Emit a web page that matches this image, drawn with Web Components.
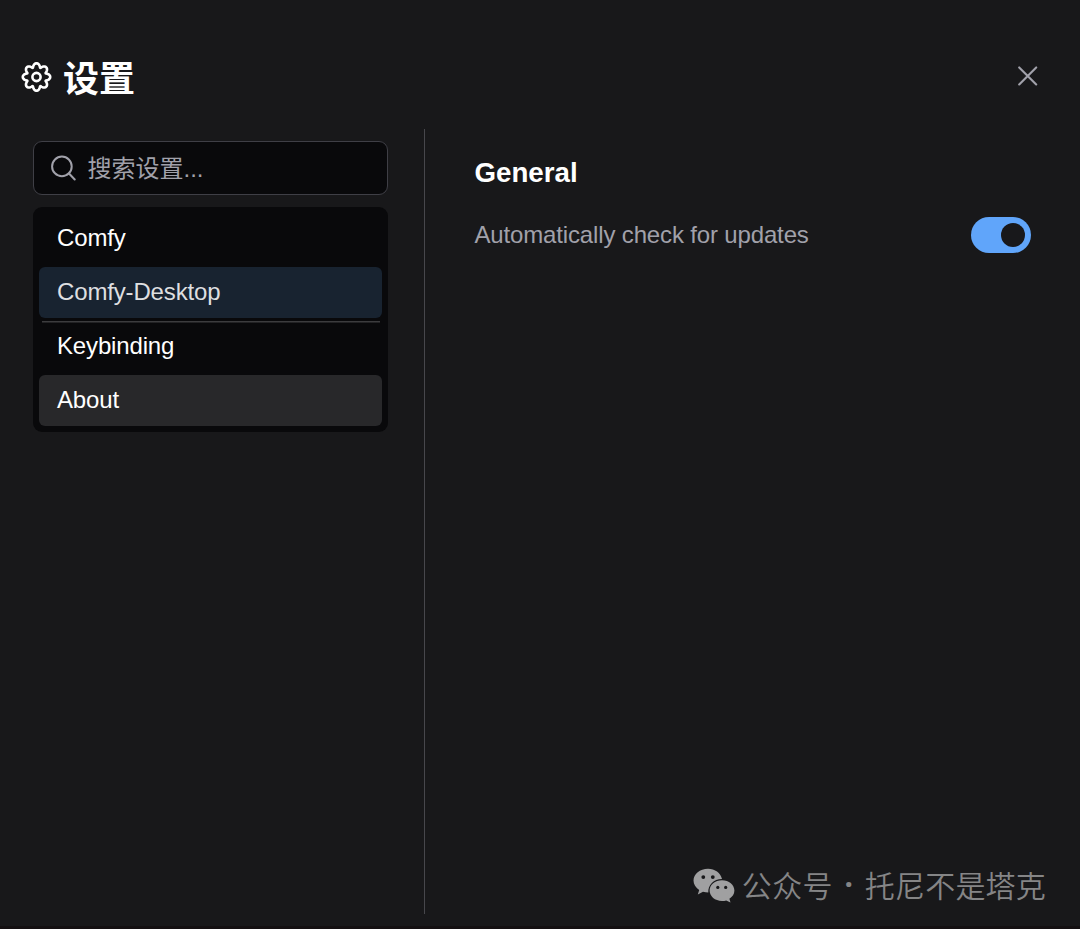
<!DOCTYPE html>
<html lang="zh-CN">
<head>
<meta charset="utf-8">
<title>设置</title>
<style>
  html, body {
    margin: 0;
    height: 929px;
    overflow: hidden;
    background: #18181a;
  }
</style>
</head>
<body>
<settings-dialog></settings-dialog>

<script>
class GearIcon extends HTMLElement {

  constructor() {
    super();
    this.attachShadow({ mode: "open" });
    this.shadowRoot.innerHTML = `
      <style>
        :host { display: block; width: 31px; height: 32px; }
        svg { display: block; }
      </style>
      <svg width="31" height="32" viewBox="-15.5 -16 31 32" fill="none" stroke="#fff" stroke-width="2.6" stroke-linejoin="round">
        <path d="${GearIcon.outline()}"/>
        <circle r="4.1"/>
      </svg>
    `;
  }

  // eight rounded teeth
  static outline() {
    const points = [];
    for (let i = 0; i < 240; i++) {
      const a = i * Math.PI / 120;
      const r = 11.8 + 1.9 * Math.cos(8 * a);
      const b = a + 0.06 * Math.sin(8 * a);
      points.push(`${(r * Math.cos(b)).toFixed(2)} ${(r * Math.sin(b)).toFixed(2)}`);
    }
    return "M" + points.join("L") + "Z";
  }
}

class SearchBox extends HTMLElement {

  static html = `
    <svg width="26" height="26" viewBox="0 0 26 26" fill="none" stroke="#a1a1aa" stroke-width="2" stroke-linecap="round">
      <circle cx="11.9" cy="11.4" r="9.8"/>
      <path d="M19 18.5L24.7 24.5"/>
    </svg>
    <span><slot></slot></span>
  `;

  static css = `
    :host {
      box-sizing: border-box;
      display: flex;
      align-items: center;
      height: 54px;
      padding-left: 16px;
      gap: 11.5px;
      border: 1.5px solid #3f3f46;
      border-radius: 9px;
      background: #09090b;
      color: #a1a1aa;
      font-size: 24px;
      line-height: 30px;
    }
    span {
      padding-top: 2px;
    }
  `;

  constructor() {
    super();
    this.attachShadow({ mode: "open" });
    this.shadowRoot.innerHTML = `<style>${SearchBox.css}</style>${SearchBox.html}`;
  }
}

class MenuList extends HTMLElement {

  static css = `
    :host {
      box-sizing: border-box;
      display: flex;
      flex-direction: column;
      gap: 3px;
      padding: 6px;
      border-radius: 9px;
      background: #09090b;
    }
  `;

  constructor() {
    super();
    this.attachShadow({ mode: "open" });
    this.shadowRoot.innerHTML = `<style>${MenuList.css}</style><slot></slot>`;
  }
}

class MenuItem extends HTMLElement {

  static css = `
    :host {
      box-sizing: border-box;
      display: block;
      height: 51px;
      padding-left: 18px;
      border-radius: 6px;
      color: #fff;
      font-size: 24px;
      line-height: 49px;
      letter-spacing: -0.15px;
    }
    :host([selected]) {
      background: #182330;
      color: #dedfe0;
    }
    :host([hovered]) {
      background: #28282a;
    }
    :host([divided]) {
      border-radius: 0;
      background: linear-gradient(#3c3c3e, #3c3c3e) 3px 0 / 338px 1.5px no-repeat;
    }
  `;

  constructor() {
    super();
    this.attachShadow({ mode: "open" });
    this.shadowRoot.innerHTML = `<style>${MenuItem.css}</style><slot></slot>`;
  }
}

class ToggleSwitch extends HTMLElement {

  static css = `
    :host {
      box-sizing: border-box;
      display: flex;
      align-items: center;
      justify-content: flex-end;
      width: 59.5px;
      height: 35.5px;
      padding: 6px;
      border-radius: 18px;
      background: #60a5fa;
    }
    i {
      width: 24px;
      height: 24px;
      border-radius: 50%;
      background: #18181b;
    }
  `;

  constructor() {
    super();
    this.attachShadow({ mode: "open" });
    this.shadowRoot.innerHTML = `<style>${ToggleSwitch.css}</style><i></i>`;
  }
}

class AccountMark extends HTMLElement {

  static html = `
    <svg width="42" height="35" viewBox="0 0 42 35">
      <path fill="#a0a0a1" d="M15 .8C6.9.8.5 6 .5 12.6c0 3.9 2.2 7.1 5.7 9.3L4.8 26.4l5.2-2.7c1.7.5 3.4.7 5.3.7C15 17 20.5 11 29 11 27.5 5 22 .8 15 .8Z"/>
      <path fill="#a0a0a1" d="M29 12.2c-7 0-12.4 4.6-12.4 10.4S22 33 29 33c1.5 0 2.9-.2 4.2-.6l4.3 2.1-1.1-3.7c3.1-1.9 5-4.7 5-8.2 0-5.8-5.4-10.4-12.4-10.4Z"/>
      <g fill="#18181a">
        <circle cx="10.3" cy="9.1" r="1.9"/>
        <circle cx="19.8" cy="9.1" r="1.9"/>
        <circle cx="24.8" cy="19.4" r="1.6"/>
        <circle cx="32.7" cy="19.4" r="1.6"/>
      </g>
    </svg>
    <span class="kind">公众号</span>
    <span class="dot">·</span>
    <span class="name">托尼不是塔克</span>
  `;

  static css = `
    :host {
      display: flex;
      align-items: center;
      height: 42px;
      color: #858586;
      font: 350 30px/36px "Noto Sans CJK SC", sans-serif;
      white-space: nowrap;
    }
    span { padding-bottom: 3px; }
    .kind { margin-left: 7px; width: 91px; letter-spacing: 0.4px; }
    .dot { width: 32px; text-align: center; font-family: "Noto Sans", sans-serif; font-weight: bold; }
    .name { letter-spacing: 0.2px; }
  `;

  constructor() {
    super();
    this.attachShadow({ mode: "open" });
    this.shadowRoot.innerHTML = `<style>${AccountMark.css}</style>${AccountMark.html}`;
  }
}

class SettingsDialog extends HTMLElement {

  static html = `
    <header>
      <gear-icon></gear-icon>
      <h1>设置</h1>
      <svg width="20" height="20" viewBox="0 0 20 20" fill="none" stroke="#a1a1aa" stroke-width="2.1" stroke-linecap="round">
        <path d="M1.2 1.4L18.2 18.4M18.2 1.4L1.2 18.4"/>
      </svg>
    </header>
    <main>
      <nav>
        <search-box>搜索设置...</search-box>
        <menu-list>
          <menu-item>Comfy</menu-item>
          <menu-item selected>Comfy-Desktop</menu-item>
          <menu-item divided>Keybinding</menu-item>
          <menu-item hovered>About</menu-item>
        </menu-list>
      </nav>
      <section>
        <h2>General</h2>
        <div class="row">
          <span>Automatically check for updates</span>
          <toggle-switch></toggle-switch>
        </div>
        <account-mark></account-mark>
      </section>
    </main>
  `;

  static css = `
    :host {
      box-sizing: border-box;
      display: flex;
      flex-direction: column;
      width: 1080px;
      height: 929px;
      border-bottom: 3px solid #141012;
      background: #18181a;
      font-family: "Liberation Sans", "Noto Sans CJK SC", sans-serif;
    }
    header {
      display: flex;
      align-items: center;
      height: 53px;
      padding: 50px 42.5px 26px 21px;
    }
    header > svg {
      margin-bottom: 1px;
    }
    h1 {
      flex: 1;
      margin: 0 0 0 11px;
      color: #fff;
      font: bold 36px/53px "Noto Sans CJK SC", sans-serif;
    }
    main {
      display: flex;
      height: 785px;
    }
    nav {
      display: flex;
      flex-direction: column;
      gap: 12px;
      box-sizing: border-box;
      width: 425px;
      padding: 12px 36px 0 33px;
      border-right: 1px solid #47474c;
    }
    section {
      display: flex;
      flex: 1;
      flex-direction: column;
      padding: 27px 49.5px 8px 49.5px;
    }
    h2 {
      margin: 0;
      color: #fff;
      font-size: 27.7px;
      line-height: 34px;
    }
    .row {
      display: flex;
      align-items: center;
      justify-content: space-between;
      margin-top: 27px;
      color: #a1a1aa;
      font-size: 24px;
      letter-spacing: -0.15px;
    }
    account-mark {
      align-self: flex-end;
      margin: auto -15.5px 0 0;
    }
  `;

  constructor() {
    super();
    this.attachShadow({ mode: "open" });
    this.shadowRoot.innerHTML = `<style>${SettingsDialog.css}</style>${SettingsDialog.html}`;
  }
}

customElements.define("gear-icon", GearIcon);
customElements.define("search-box", SearchBox);
customElements.define("menu-list", MenuList);
customElements.define("menu-item", MenuItem);
customElements.define("toggle-switch", ToggleSwitch);
customElements.define("account-mark", AccountMark);
customElements.define("settings-dialog", SettingsDialog);
</script>
</body>
</html>
